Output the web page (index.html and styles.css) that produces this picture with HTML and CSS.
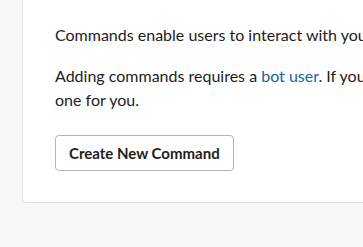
FILE: index.html
```html
<!DOCTYPE html>
<html lang="en">
<head>
    <meta charset="UTF-8">
    <meta name="viewport" content="width=device-width, initial-scale=1.0">
    <title>Slash Commands</title>
    <link rel="stylesheet" href="styles.css">
</head>
<body>
    <div class="page">
        <div class="card">
            <p>Commands enable users to interact with your app from within Slack.</p>
            <p>Adding commands requires a <a href="#">bot user</a>. If you don't have a bot user yet, we'll create one for you.</p>
            <button class="btn">Create New Command</button>
        </div>
    </div>
</body>
</html>
```

FILE: styles.css
```css
body {
    margin: 0;
    background-color: #f8f8f8;
    font-family: Lato, "Noto Sans", sans-serif;
    color: #1d1c1d;
    overflow: hidden;
}
.page {
    padding: 0 0 0 22px;
    width: 800px;
}
.card {
    margin-top: -10px;
    background: white;
    border: 1px solid #e4e4e4;
    border-radius: 4px;
    box-shadow: 0 1px 2px rgba(0,0,0,0.06);
    padding: 32px 32px 31px 32px;
}
p {
    margin: 0 0 17px 0;
    font-size: 16px;
    line-height: 24px;
    width: 590px;
}
a {
    color: #1264a3;
    text-decoration: none;
}
.btn {
    margin-top: 6px;
    height: 36px;
    padding: 0 13px;
    font-family: Lato, "Noto Sans", sans-serif;
    font-size: 15px;
    font-weight: 700;
    color: #1d1c1d;
    background: white;
    border: 1px solid #b5b5b5;
    border-radius: 4px;
}
```
